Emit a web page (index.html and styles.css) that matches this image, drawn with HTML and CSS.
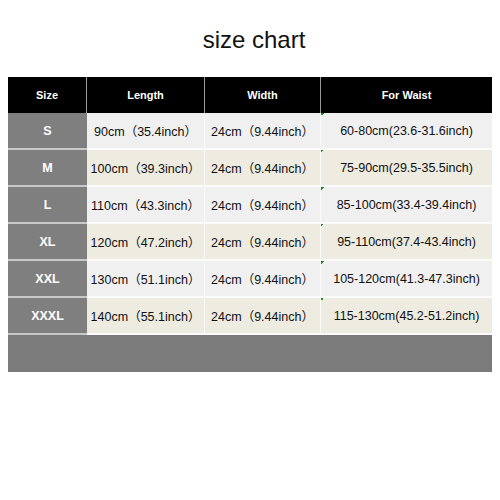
FILE: index.html
```html
<!DOCTYPE html>
<html>
<head>
<meta charset="utf-8">
<link rel="stylesheet" href="styles.css">
</head>
<body>
<div class="page">
  <h1 class="title">size chart</h1>
  <div class="chart">
    <div class="hd">Size</div>
    <div class="hd">Length</div>
    <div class="hd">Width</div>
    <div class="hd">For Waist</div>

    <div class="sz">S</div>
    <div class="c a">90cm（35.4inch）</div>
    <div class="c a">24cm（9.44inch）</div>
    <div class="c a mark">60-80cm(23.6-31.6inch)</div>

    <div class="sz">M</div>
    <div class="c b">100cm（39.3inch）</div>
    <div class="c b">24cm（9.44inch）</div>
    <div class="c b mark">75-90cm(29.5-35.5inch)</div>

    <div class="sz">L</div>
    <div class="c a">110cm（43.3inch）</div>
    <div class="c a">24cm（9.44inch）</div>
    <div class="c a mark">85-100cm(33.4-39.4inch)</div>

    <div class="sz">XL</div>
    <div class="c b">120cm（47.2inch）</div>
    <div class="c b">24cm（9.44inch）</div>
    <div class="c b mark">95-110cm(37.4-43.4inch)</div>

    <div class="sz">XXL</div>
    <div class="c a">130cm（51.1inch）</div>
    <div class="c a">24cm（9.44inch）</div>
    <div class="c a mark">105-120cm(41.3-47.3inch)</div>

    <div class="sz">XXXL</div>
    <div class="c b">140cm（55.1inch）</div>
    <div class="c b">24cm（9.44inch）</div>
    <div class="c b mark">115-130cm(45.2-51.2inch)</div>

    <div class="foot"></div>
  </div>
</div>
</body>
</html>
```

FILE: styles.css
```css
html, body {
  margin: 0;
  padding: 0;
  background: #ffffff;
}
.page {
  width: 500px;
  height: 500px;
  padding: 25px 8px 0 8px;
  box-sizing: border-box;
  font-family: "Liberation Sans", Arial, "Noto Sans CJK SC", sans-serif;
}
.title {
  margin: 0 0 22px 0;
  font-size: 24px;
  line-height: 30px;
  font-weight: normal;
  text-align: center;
  color: #111;
  padding-left: 8px;
}
.chart {
  display: grid;
  grid-template-columns: 79px 118px 116px 171px;
  grid-template-rows: 36px repeat(6, 37px) 37px;
  width: 484px;
}
.chart > div {
  box-sizing: border-box;
  display: flex;
  align-items: center;
  justify-content: center;
  white-space: nowrap;
}
.hd {
  background: #000;
  color: #fff;
  font-weight: bold;
  font-size: 11px;
  border-right: 1px solid #9a9a9a;
}
.hd:last-of-type {
  border-right: none;
}
.chart > .hd:nth-child(4) {
  border-right: none;
}
.sz {
  background: #7f7f7f;
  color: #fff;
  font-weight: bold;
  font-size: 12.5px;
  border-bottom: 2px solid #c8c8c8;
}
.c {
  font-size: 12.5px;
  color: #111;
  border-right: 1px solid #fafafa;
  border-bottom: 2px solid #fbfbfb;
}
.a {
  background: #f0f0f1;
}
.b {
  background: #eeebe1;
}
.chart > .mark {
  position: relative;
  border-right: none;
}
.mark::before {
  content: "";
  position: absolute;
  left: 0;
  top: 0;
  width: 3px;
  height: 3px;
  background: linear-gradient(135deg, #1e8a1e 50%, transparent 50%);
}
.foot {
  grid-column: 1 / 5;
  background: #7b7b7b;
}
```
